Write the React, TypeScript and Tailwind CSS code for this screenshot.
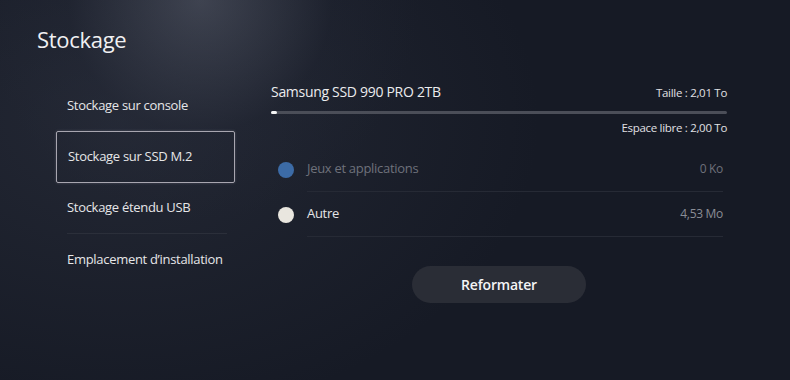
import React from "react";

const font = { fontFamily: '"Open Sans", "Liberation Sans", sans-serif' };

export default function App() {
  return (
    <div
      className="relative w-[790px] h-[380px] overflow-hidden bg-[#161a25] text-[#e6e6e8]"
      style={font}
    >
      <div className="absolute inset-0 bg-[radial-gradient(ellipse_220px_220px_at_200px_0px,rgba(120,125,140,0.42),rgba(40,45,60,0.15)_60%,transparent_100%)]" />
      <div className="absolute inset-0 bg-[radial-gradient(ellipse_420px_300px_at_120px_120px,rgba(60,65,80,0.35),transparent_100%)]" />
      <div className="relative flex flex-col">
        <div className="pl-[37px] pt-[24px] h-[80px]">
          <h1 className="text-[22px] leading-[30px] tracking-[-0.3px] text-[#f0f0f2]">Stockage</h1>
        </div>
        <div className="flex">
          {/* left menu */}
          <div className="ml-[56px] w-[179px] flex flex-col">
            <div className="h-[51px] flex items-center pl-[11px] text-[13px] tracking-[-0.3px]">
              Stockage sur console
            </div>
            <div className="h-[52px] flex items-center pl-[11px] text-[13px] tracking-[-0.3px] border border-[#a8a6b0] rounded-[2px] shadow-[0_0_3px_rgba(200,200,220,0.25)]">
              Stockage sur SSD M.2
            </div>
            <div className="h-[51px] flex items-center text-[13px] tracking-[-0.3px] ml-[11px] mr-[8px] border-b border-[#2b2f3a]">
              Stockage étendu USB
            </div>
            <div className="h-[52px] flex items-center pl-[11px] text-[13px] tracking-[-0.3px]">
              Emplacement d’installation
            </div>
          </div>
          {/* right panel */}
          <div className="ml-[36px] w-[456px] flex flex-col">
            <div className="flex justify-between items-end h-[22px]">
              <span className="text-[14px] tracking-[-0.3px] text-[#ececee]">Samsung SSD 990 PRO 2TB</span>
              <span className="text-[11.5px] tracking-[-0.3px] text-[#e0e0e4] mb-[1px]">Taille : 2,01 To</span>
            </div>
            <div className="mt-[9px] h-[3px] rounded-full bg-[#4b4e58] flex">
              <div className="w-[6px] h-[3px] rounded-full bg-[#f4f4f4]" />
            </div>
            <div className="mt-[7px] flex justify-end text-[11.5px] tracking-[-0.3px] text-[#e0e0e4] leading-[14px]">
              Espace libre : 2,00 To
            </div>
            <div className="mt-[12px] flex flex-col pl-[7px] pr-[4px]">
              <div className="flex items-center h-[45px]">
                <div className="w-[16px] h-[16px] rounded-full bg-[#3c6ba6]" />
                <div className="ml-[13px] flex-1 flex items-center justify-between h-full border-b border-[#262a35]">
                  <span className="text-[13px] tracking-[-0.3px] text-[#6e717b]">Jeux et applications</span>
                  <span className="text-[12px] tracking-[-0.3px] text-[#6e717b]">0 Ko</span>
                </div>
              </div>
              <div className="flex items-center h-[45px]">
                <div className="w-[16px] h-[16px] rounded-full bg-[#e9e6df]" />
                <div className="ml-[13px] flex-1 flex items-center justify-between h-full border-b border-[#262a35]">
                  <span className="text-[13px] tracking-[-0.3px] text-[#e4e4e6]">Autre</span>
                  <span className="text-[12px] tracking-[-0.3px] text-[#8a8d96]">4,53 Mo</span>
                </div>
              </div>
            </div>
            <div className="mt-[29px] flex">
              <div className="ml-[141px] w-[174px] h-[37px] rounded-full bg-[#2a2d36] flex items-center justify-center text-[14px] font-semibold tracking-[-0.2px] text-[#f4f4f6]">
                Reformater
              </div>
            </div>
          </div>
        </div>
      </div>
    </div>
  );
}
